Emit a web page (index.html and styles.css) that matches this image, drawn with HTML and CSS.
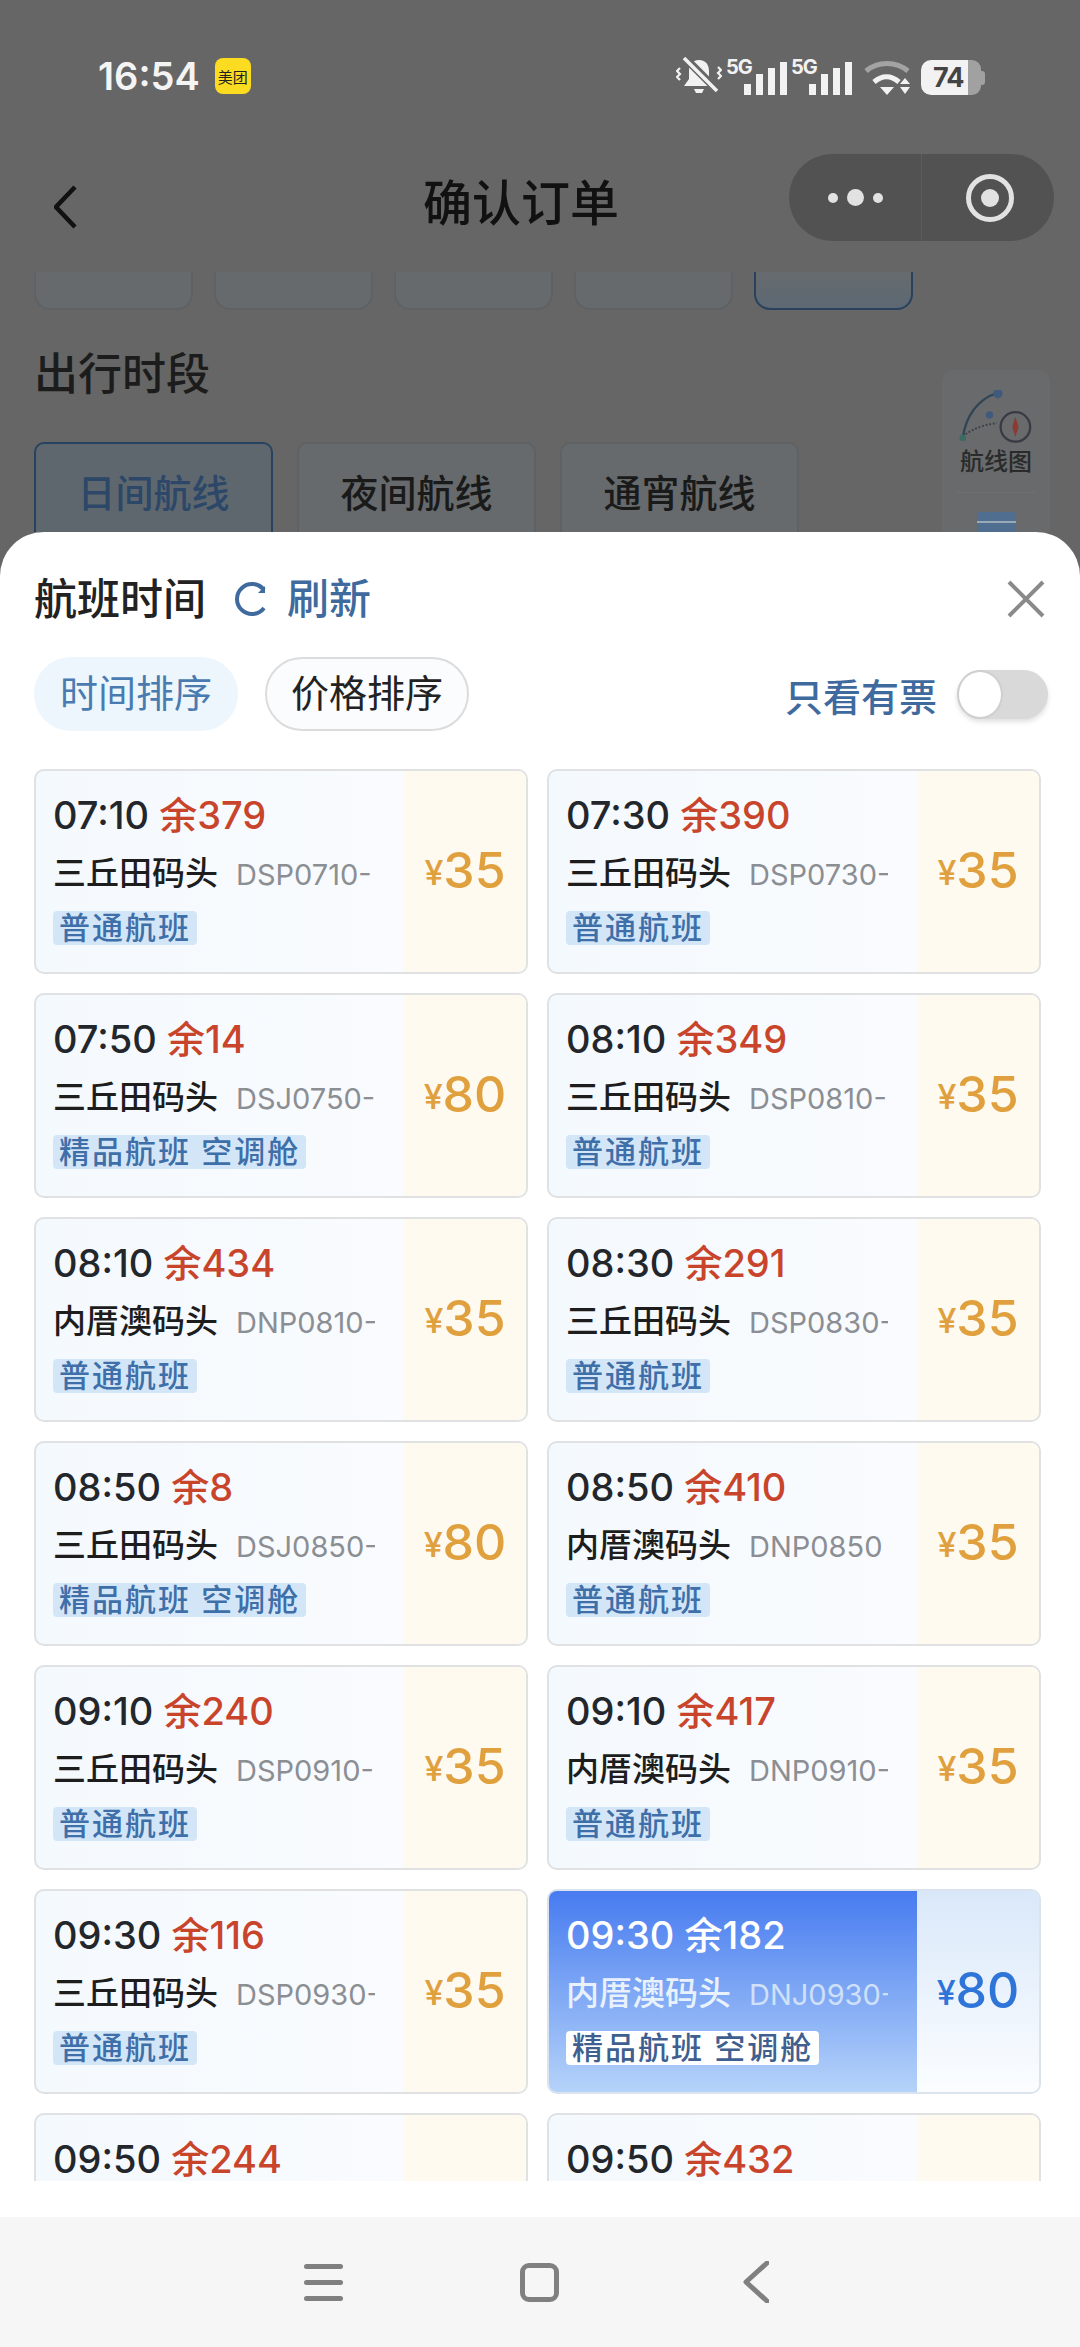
FILE: index.html

```html
<!DOCTYPE html>
<html lang="zh-CN">
<head>
    <meta charset="UTF-8">
    <meta name="viewport" content="width=device-width, initial-scale=1.0">
    <title>确认订单</title>
    <link rel="stylesheet" href="styles.css">
</head>
<body>
    <div class="backdrop">
        <div class="status-bar">
            <span class="clock">16:54</span>
            <span class="app-badge">美团</span>
            <div class="status-icons">
                <svg class="ico-bell" width="46" height="38" viewBox="0 0 46 38">
                    <path d="M23 3c-7 0-10 5-10 11v8l-5 7h30l-5-7v-8c0-6-3-11-10-11z" fill="#f2f2f2"/>
                    <path d="M18 32h10l-2 4h-6z" fill="#f2f2f2"/>
                    <path d="M9 1l33 33" stroke="#666" stroke-width="8"/>
                    <path d="M8 1l33 33" stroke="#f2f2f2" stroke-width="3.5"/>
                    <path d="M4 11l-3 3 3 3-3 3 3 3M42 10l3 3-3 3 3 3-3 3" stroke="#f2f2f2" stroke-width="2.2" fill="none"/>
                </svg>
                <div class="signal">
                    <span class="net">5G</span>
                    <svg width="43" height="33" viewBox="0 0 43 33"><path d="M0 22h7v11H0zM12 12h7v21h-7zM24 6h7v27h-7zM36 0h7v33h-7z" fill="#f2f2f2"/></svg>
                </div>
                <div class="signal">
                    <span class="net">5G</span>
                    <svg width="43" height="33" viewBox="0 0 43 33"><path d="M0 22h7v11H0zM12 12h7v21h-7zM24 6h7v27h-7zM36 0h7v33h-7z" fill="#f2f2f2"/></svg>
                </div>
                <svg class="ico-wifi" width="47" height="35" viewBox="0 0 47 35">
                    <path d="M2 11c12-10 30-10 42 0" stroke="#a3a3a3" stroke-width="5" fill="none"/>
                    <path d="M10 22c8-7 17-7 25 0" stroke="#f2f2f2" stroke-width="5" fill="none"/>
                    <path d="M16 27h14l-7 8z" fill="#f2f2f2"/>
                    <path d="M41 18l5 6H36zM36 27h10l-5 7z" fill="#f2f2f2"/>
                </svg>
                <div class="battery">
                    <span class="battery-level">74</span>
                    <span class="battery-rest"></span>
                    <span class="battery-cap"></span>
                </div>
            </div>
        </div>

        <div class="nav-bar">
            <svg class="back" width="24" height="44" viewBox="0 0 24 44"><path d="M21 2L2 22l19 20" stroke="#111" stroke-width="4.5" fill="none"/></svg>
            <h1 class="page-title">确认订单</h1>
            <div class="capsule">
                <div class="capsule-dots"><i></i><b></b><i></i></div>
                <div class="capsule-ring"></div>
            </div>
        </div>

        <div class="date-row">
            <div class="date-chip"></div>
            <div class="date-chip"></div>
            <div class="date-chip"></div>
            <div class="date-chip"></div>
            <div class="date-chip active"></div>
        </div>

        <h2 class="section-title">出行时段</h2>

        <div class="period-row">
            <div class="period active">日间航线</div>
            <div class="period">夜间航线</div>
            <div class="period">通宵航线</div>
        </div>

        <div class="side-tools">
            <svg width="78" height="60" viewBox="0 0 78 60">
                <path d="M3 52C6 30 18 10 41 3" stroke="#2f4556" stroke-width="2.5" fill="none"/>
                <circle cx="41" cy="4" r="5" fill="#3f5a7c"/>
                <circle cx="3" cy="52" r="3.5" fill="#3d6a62"/>
                <path d="M6 48c10-7 22-11 34-12" stroke="#3a3f44" stroke-width="2" stroke-dasharray="2 2" fill="none"/>
                <circle cx="32" cy="27" r="4" fill="#3f5a7c"/>
                <circle cx="60" cy="40" r="16" stroke="#3a3a44" stroke-width="2.5" fill="#686a6c"/>
                <path d="M60 29l3.5 11-3.5 11-3.5-11z" fill="#8c3b34"/>
            </svg>
            <span class="side-label">航线图</span>
            <div class="side-line"></div>
            <div class="side-doc"></div>
        </div>
    </div>

    <div class="sheet">
        <div class="sheet-head">
            <span class="sheet-title">航班时间</span>
            <svg class="ico-refresh" width="36" height="36" viewBox="0 0 36 36"><path d="M31 9A15 15 0 1 0 31 27" stroke="#3f6a9e" stroke-width="4" fill="none"/><path d="M32 5v7H25z" fill="#3f6a9e"/></svg>
            <span class="refresh">刷新</span>
            <svg class="ico-close" width="38" height="38" viewBox="0 0 38 38"><path d="M2 2l34 34M36 2L2 36" stroke="#8a8a8a" stroke-width="4" fill="none"/></svg>
        </div>

        <div class="sort-row">
            <span class="pill active">时间排序</span>
            <span class="pill">价格排序</span>
            <span class="only-label">只看有票</span>
            <div class="toggle"><span class="knob"></span></div>
        </div>

        <div class="flight-list">
            <div class="flight">
                <div class="flight-info">
                    <div class="flight-time">07:10 <span class="left">余379</span></div>
                    <div class="flight-place">三丘田码头<span class="code">DSP0710-</span></div>
                    <span class="tag">普通航班</span>
                </div>
                <div class="flight-price"><small>¥</small>35</div>
            </div>
            <div class="flight">
                <div class="flight-info">
                    <div class="flight-time">07:30 <span class="left">余390</span></div>
                    <div class="flight-place">三丘田码头<span class="code">DSP0730-</span></div>
                    <span class="tag">普通航班</span>
                </div>
                <div class="flight-price"><small>¥</small>35</div>
            </div>
            <div class="flight">
                <div class="flight-info">
                    <div class="flight-time">07:50 <span class="left">余14</span></div>
                    <div class="flight-place">三丘田码头<span class="code">DSJ0750-</span></div>
                    <span class="tag">精品航班 空调舱</span>
                </div>
                <div class="flight-price"><small>¥</small>80</div>
            </div>
            <div class="flight">
                <div class="flight-info">
                    <div class="flight-time">08:10 <span class="left">余349</span></div>
                    <div class="flight-place">三丘田码头<span class="code">DSP0810-</span></div>
                    <span class="tag">普通航班</span>
                </div>
                <div class="flight-price"><small>¥</small>35</div>
            </div>
            <div class="flight">
                <div class="flight-info">
                    <div class="flight-time">08:10 <span class="left">余434</span></div>
                    <div class="flight-place">内厝澳码头<span class="code">DNP0810-</span></div>
                    <span class="tag">普通航班</span>
                </div>
                <div class="flight-price"><small>¥</small>35</div>
            </div>
            <div class="flight">
                <div class="flight-info">
                    <div class="flight-time">08:30 <span class="left">余291</span></div>
                    <div class="flight-place">三丘田码头<span class="code">DSP0830-</span></div>
                    <span class="tag">普通航班</span>
                </div>
                <div class="flight-price"><small>¥</small>35</div>
            </div>
            <div class="flight">
                <div class="flight-info">
                    <div class="flight-time">08:50 <span class="left">余8</span></div>
                    <div class="flight-place">三丘田码头<span class="code">DSJ0850-</span></div>
                    <span class="tag">精品航班 空调舱</span>
                </div>
                <div class="flight-price"><small>¥</small>80</div>
            </div>
            <div class="flight">
                <div class="flight-info">
                    <div class="flight-time">08:50 <span class="left">余410</span></div>
                    <div class="flight-place">内厝澳码头<span class="code">DNP0850</span></div>
                    <span class="tag">普通航班</span>
                </div>
                <div class="flight-price"><small>¥</small>35</div>
            </div>
            <div class="flight">
                <div class="flight-info">
                    <div class="flight-time">09:10 <span class="left">余240</span></div>
                    <div class="flight-place">三丘田码头<span class="code">DSP0910-</span></div>
                    <span class="tag">普通航班</span>
                </div>
                <div class="flight-price"><small>¥</small>35</div>
            </div>
            <div class="flight">
                <div class="flight-info">
                    <div class="flight-time">09:10 <span class="left">余417</span></div>
                    <div class="flight-place">内厝澳码头<span class="code">DNP0910-</span></div>
                    <span class="tag">普通航班</span>
                </div>
                <div class="flight-price"><small>¥</small>35</div>
            </div>
            <div class="flight">
                <div class="flight-info">
                    <div class="flight-time">09:30 <span class="left">余116</span></div>
                    <div class="flight-place">三丘田码头<span class="code">DSP0930-</span></div>
                    <span class="tag">普通航班</span>
                </div>
                <div class="flight-price"><small>¥</small>35</div>
            </div>
            <div class="flight selected">
                <div class="flight-info">
                    <div class="flight-time">09:30 <span class="left">余182</span></div>
                    <div class="flight-place">内厝澳码头<span class="code">DNJ0930-</span></div>
                    <span class="tag">精品航班 空调舱</span>
                </div>
                <div class="flight-price"><small>¥</small>80</div>
            </div>
            <div class="flight">
                <div class="flight-info">
                    <div class="flight-time">09:50 <span class="left">余244</span></div>
                </div>
                <div class="flight-price"></div>
            </div>
            <div class="flight">
                <div class="flight-info">
                    <div class="flight-time">09:50 <span class="left">余432</span></div>
                </div>
                <div class="flight-price"></div>
            </div>
        </div>
    </div>

    <div class="system-nav">
        <div class="sys-menu"><span></span><span></span><span></span></div>
        <div class="sys-home"></div>
        <svg class="sys-back" width="26" height="42" viewBox="0 0 26 42"><path d="M24 2L3 21l21 19" stroke="#808080" stroke-width="5" stroke-linecap="round" stroke-linejoin="round" fill="none"/></svg>
    </div>
</body>
</html>
```

FILE: styles.css

```css
* {
    box-sizing: border-box;
}

body {
    width: 1080px;
    height: 2347px;
    margin: 0;
    overflow: hidden;
    display: flex;
    flex-direction: column;
    background-color: #666;
    font-family: Inter, "Noto Sans CJK SC", sans-serif;
}

/* dimmed page behind the sheet */
.backdrop {
    position: relative;
    height: 532px;
    overflow: hidden;
    flex-shrink: 0;
}

.status-bar {
    display: flex;
    align-items: center;
    height: 152px;
    padding: 0 95px 0 98px;
}

.clock {
    font-size: 38px;
    font-weight: 600;
    color: #f4f4f4;
}

.app-badge {
    display: flex;
    align-items: center;
    justify-content: center;
    width: 36px;
    height: 36px;
    margin-left: 15px;
    border-radius: 8px;
    background-color: #fbdc21;
    color: #222;
    font-size: 15px;
    white-space: nowrap;
}

.status-icons {
    display: flex;
    align-items: flex-end;
    height: 38px;
    margin-left: auto;
    gap: 6px;
}

.signal {
    position: relative;
    width: 59px;
    height: 33px;
    display: flex;
    justify-content: flex-end;
}

.net {
    position: absolute;
    left: -2px;
    top: -5px;
    font-size: 20px;
    line-height: 20px;
    font-weight: 700;
    letter-spacing: -1px;
    color: #f2f2f2;
}

.ico-wifi {
    margin-left: 6px;
}

.battery {
    display: flex;
    align-items: center;
    width: 64px;
    height: 35px;
    margin-left: 4px;
}

.battery-level {
    width: 47px;
    height: 35px;
    line-height: 35px;
    padding-left: 12px;
    border-radius: 10px 0 0 10px;
    background-color: #f2f2f2;
    color: #444;
    font-size: 27px;
    font-weight: 700;
    letter-spacing: -1px;
}

.battery-rest {
    width: 13px;
    height: 35px;
    border-radius: 0 9px 9px 0;
    background-color: #a1a1a1;
}

.battery-cap {
    width: 4px;
    height: 14px;
    border-radius: 0 3px 3px 0;
    background-color: #a1a1a1;
}

.nav-bar {
    display: flex;
    height: 120px;
    padding: 0 26px 0 54px;
}

.back {
    margin-top: 33px;
}

.page-title {
    margin: 22px 0 0 345px;
    font-size: 49px;
    line-height: 60px;
    font-weight: 500;
    color: #111;
    white-space: nowrap;
}

.capsule {
    position: absolute;
    left: 789px;
    top: 154px;
    display: flex;
    width: 265px;
    height: 87px;
    border-radius: 44px;
    background-color: #525252;
}

.capsule-dots {
    display: flex;
    align-items: center;
    justify-content: center;
    gap: 9px;
    width: 133px;
    border-right: 1px solid #5c5c5c;
}

.capsule-dots i {
    width: 10px;
    height: 10px;
    border-radius: 50%;
    background-color: #e2e2e2;
}

.capsule-dots b {
    width: 17px;
    height: 17px;
    border-radius: 50%;
    background-color: #e2e2e2;
}

.capsule-ring {
    position: relative;
    width: 48px;
    height: 48px;
    margin: 20px 0 0 44px;
    border: 5px solid #e2e2e2;
    border-radius: 50%;
}

.capsule-ring::after {
    content: "";
    position: absolute;
    left: 10px;
    top: 10px;
    width: 18px;
    height: 18px;
    border-radius: 50%;
    background-color: #e2e2e2;
}

.date-row {
    display: flex;
    gap: 21px;
    height: 38px;
    padding-left: 34px;
}

.date-chip {
    width: 159px;
    height: 38px;
    border: 2px solid #5f6264;
    border-top: none;
    border-radius: 0 0 16px 16px;
    background-color: #676a6c;
}

.date-chip.active {
    border-color: #28415c;
    background: linear-gradient(#676b6e, #5c6873);
}

.section-title {
    margin: 34px 0 0 34px;
    font-size: 44px;
    line-height: 60px;
    font-weight: 500;
    color: #1c1c1c;
}

.period-row {
    display: flex;
    gap: 24px;
    margin-top: 38px;
    padding-left: 34px;
}

.period {
    width: 239px;
    height: 110px;
    padding-top: 21px;
    border: 2px solid #5f6264;
    border-radius: 10px;
    background-color: #666a6c;
    color: #1a1a1a;
    font-size: 38px;
    line-height: 56px;
    font-weight: 500;
    text-align: center;
}

.period.active {
    border-color: #27435f;
    background-color: #5f676e;
    color: #2c4768;
}

.side-tools {
    position: absolute;
    left: 942px;
    top: 370px;
    width: 108px;
    height: 170px;
    display: flex;
    flex-direction: column;
    align-items: center;
    padding-top: 20px;
    background-color: #686a6c;
    border-radius: 12px;
}

.side-label {
    margin-top: -1px;
    font-size: 24px;
    line-height: 36px;
    font-weight: 500;
    color: #2a2a2a;
}

.side-line {
    width: 80px;
    height: 1px;
    margin-top: 12px;
    background-color: #6f6f6f;
}

.side-doc {
    width: 39px;
    height: 30px;
    margin-top: 19px;
    border-radius: 4px 4px 0 0;
    background: linear-gradient(#4f6e90 9px, #9aa9b8 9px, #9aa9b8 11px, #4f6e90 11px);
}

/* bottom sheet */
.sheet {
    flex: 1;
    display: flex;
    flex-direction: column;
    min-height: 0;
    border-radius: 44px 44px 0 0;
    background-color: #fff;
}

.sheet-head {
    display: flex;
    align-items: center;
    height: 62px;
    margin-top: 36px;
    padding: 0 35px 0 34px;
}

.sheet-title {
    font-size: 43px;
    font-weight: 500;
    color: #222;
    line-height: 62px;
}

.ico-refresh {
    margin-left: 27px;
}

.refresh {
    margin-left: 18px;
    font-size: 42px;
    font-weight: 500;
    line-height: 62px;
    color: #3f6a9e;
}

.ico-close {
    margin-left: auto;
}

.sort-row {
    display: flex;
    align-items: center;
    height: 74px;
    margin-top: 27px;
    padding: 0 32px 0 34px;
}

.pill {
    width: 204px;
    height: 74px;
    margin-right: 27px;
    border-radius: 37px;
    background-color: #edf6fd;
    color: #4a7bb0;
    font-size: 38px;
    line-height: 72px;
    text-align: center;
}

.pill:not(.active) {
    border: 2px solid #dcdcdc;
    background-color: #fafcfe;
    color: #222;
    line-height: 68px;
}

.only-label {
    margin-left: auto;
    font-size: 38px;
    font-weight: 500;
    color: #3f6a9e;
}

.toggle {
    width: 91px;
    height: 49px;
    margin-left: 20px;
    border-radius: 25px;
    background-color: #d9d9d9;
    box-shadow: 0 3px 5px rgba(0, 0, 0, 0.12);
}

.knob {
    display: block;
    width: 46px;
    height: 49px;
    border: 2px solid #cfcfcf;
    border-radius: 50%;
    background-color: #fff;
}

.flight-list {
    display: grid;
    grid-template-columns: 1fr 1fr;
    grid-auto-rows: 205px;
    gap: 19px;
    height: 1412px;
    margin-top: 38px;
    padding: 0 39px 0 34px;
    overflow: hidden;
}

.flight {
    display: flex;
    overflow: hidden;
    border: 2px solid #dfe1e3;
    border-radius: 10px;
    background: linear-gradient(90deg, #f4f9fd, #fbfcff);
}

.flight-info {
    width: 368px;
    flex-shrink: 0;
    padding: 17px 0 0 17px;
    overflow: hidden;
}

.flight-time {
    height: 54px;
    font-size: 38px;
    line-height: 54px;
    font-weight: 500;
    color: #23272b;
    white-space: nowrap;
}

.left {
    color: #c8452c;
}

.flight-place {
    width: 322px;
    height: 48px;
    margin-top: 7px;
    overflow: hidden;
    font-size: 33px;
    font-weight: 500;
    line-height: 48px;
    color: #1d1d1d;
    white-space: nowrap;
}

.code {
    margin-left: 18px;
    font-size: 29px;
    font-weight: 400;
    color: #8b8e93;
}

.tag {
    display: inline-block;
    height: 34px;
    margin-top: 14px;
    padding: 0 6px;
    border-radius: 4px;
    background-color: #d3e6f8;
    color: #3f6fa8;
    font-size: 31px;
    font-weight: 500;
    line-height: 34px;
    letter-spacing: 2px;
    white-space: nowrap;
}

.flight-price {
    flex: 1;
    display: flex;
    align-items: center;
    justify-content: center;
    padding-bottom: 4px;
    background-color: #fffaf0;
    color: #e0a03e;
    font-size: 50px;
    font-weight: 500;
}

.flight-price small {
    font-size: 34px;
    margin-top: 6px;
}

.flight.selected {
    border-color: #dbe3ee;
}

.flight.selected .flight-info {
    background: linear-gradient(#477bf0, #b5d3f9);
}

.flight.selected .flight-price {
    background: linear-gradient(#d9e8f9, #fbfdff);
    color: #2f74d8;
}

.flight.selected .flight-time,
.flight.selected .left {
    color: #fff;
}

.flight.selected .flight-place {
    color: #e9f1fd;
}

.flight.selected .code {
    color: #cfe0f8;
}

.flight.selected .tag {
    background-color: #fff;
    color: #3e5f8f;
}

.system-nav {
    display: flex;
    align-items: center;
    height: 130px;
    flex-shrink: 0;
    padding-left: 304px;
    background-color: #f6f6f6;
}

.sys-menu {
    display: flex;
    flex-direction: column;
    gap: 11px;
    width: 39px;
}

.sys-menu span {
    height: 5px;
    border-radius: 3px;
    background-color: #808080;
}

.sys-home {
    width: 39px;
    height: 39px;
    margin-left: 177px;
    border: 5px solid #808080;
    border-radius: 9px;
}

.sys-back {
    margin-left: 184px;
}
```
